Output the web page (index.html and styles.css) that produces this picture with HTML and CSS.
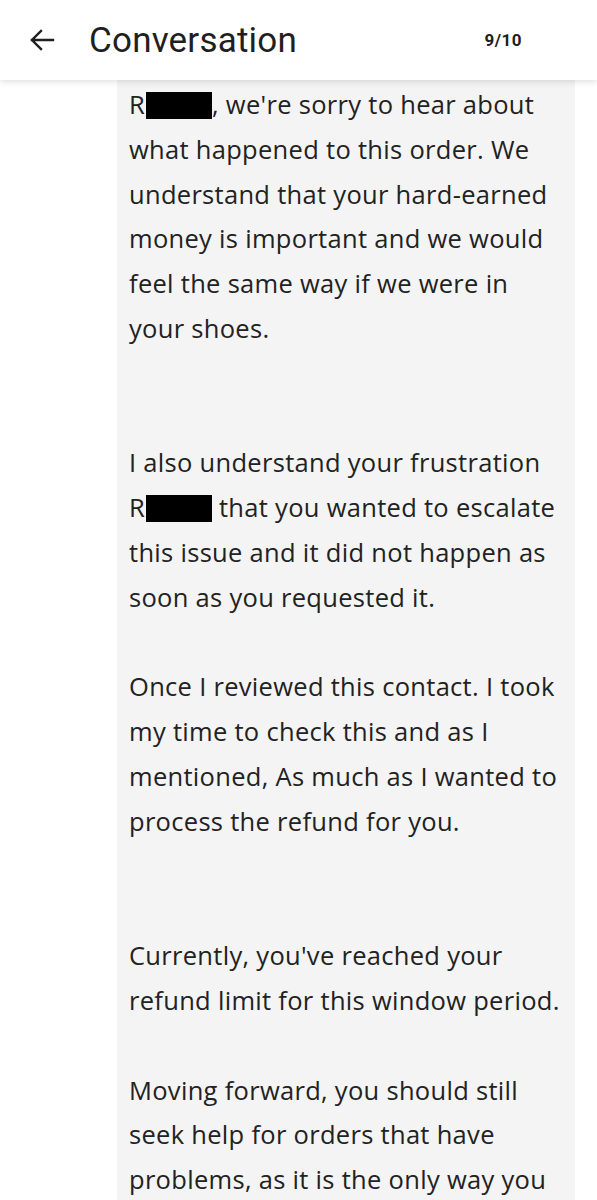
FILE: index.html
```html
<!DOCTYPE html>
<html>
<head>
<meta charset="utf-8">
<link rel="stylesheet" href="styles.css">
</head>
<body>
<div class="page">
  <header class="topbar">
    <svg class="back" width="26" height="22" viewBox="0 0 26 22">
      <path d="M24 11H3M12 2L3 11l9 9" fill="none" stroke="#1f1f1f" stroke-width="2.4" stroke-linecap="square"/>
    </svg>
    <h1 class="title">Conversation</h1>
    <span class="count">9/10</span>
  </header>
  <main class="thread">
    <div class="bubble">
      <p class="para gap2">R<span class="redact"></span>, we're sorry to hear about<br>what happened to this order. We<br>understand that your hard-earned<br>money is important and we would<br>feel the same way if we were in<br>your shoes.</p>
      <p class="para gap1">I also understand your frustration<br>R<span class="redact"></span> that you wanted to escalate<br>this issue and it did not happen as<br>soon as you requested it.</p>
      <p class="para gap2">Once I reviewed this contact. I took<br>my time to check this and as I<br>mentioned, As much as I wanted to<br>process the refund for you.</p>
      <p class="para gap1">Currently, you've reached your<br>refund limit for this window period.</p>
      <p class="para">Moving forward, you should still<br>seek help for orders that have<br>problems, as it is the only way you</p>
    </div>
  </main>
</div>
</body>
</html>
```
FILE: styles.css
```css
html, body {
  margin: 0;
  padding: 0;
  background: #ffffff;
  overflow: hidden;
}
.page {
  width: 597px;
  height: 1200px;
  position: relative;
  overflow: hidden;
  font-family: Roboto, "Liberation Sans", sans-serif;
  color: #222222;
}
.topbar {
  position: absolute;
  top: 0;
  left: 0;
  right: 0;
  height: 80px;
  background: #ffffff;
  display: flex;
  align-items: center;
  box-shadow: 0 2px 6px rgba(0,0,0,0.12);
  z-index: 2;
}
.back {
  margin-left: 29px;
  margin-right: 34px;
}
.title {
  margin: 0;
  font-size: 35px;
  font-weight: 400;
  color: #1f1f1f;
  flex: 1;
  letter-spacing: 0.2px;
}
.count {
  font-size: 17px;
  font-weight: 700;
  color: #1f1f1f;
  margin-right: 75px;
  letter-spacing: 0.5px;
}
.thread {
  padding-top: 80px;
  padding-left: 117px;
}
.bubble {
  width: 458px;
  background: #f4f4f4;
  box-sizing: border-box;
  padding: 2px 8px 40px 12px;
  min-height: 1200px;
}
.para {
  margin: 0;
  font-family: "Open Sans", Roboto, sans-serif;
  font-size: 25.5px;
  letter-spacing: 0.3px;
  line-height: 44.8px;
  color: #222222;
}
.gap1 { margin-bottom: 44.8px; }
.gap2 { margin-bottom: 89.6px; }
.redact {
  display: inline-block;
  width: 66px;
  height: 27px;
  margin-left: 1px;
  background: #000;
  vertical-align: -5px;
}
```
